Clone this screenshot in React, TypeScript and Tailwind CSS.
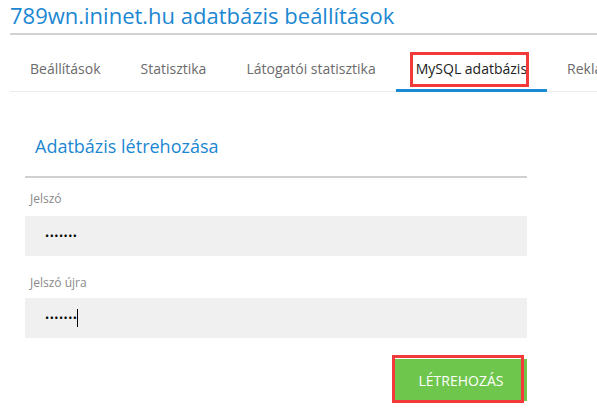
import React from "react";

export default function App() {
  const tabs = ["Beállítások", "Statisztika", "Látogatói statisztika", "MySQL adatbázis", "Reklámok"];
  return (
    <div className="w-[597px] h-[418px] overflow-hidden bg-white" style={{ fontFamily: '"Open Sans", sans-serif' }}>
      <div className="pl-[10px]">
        <h1 className="text-[22px] leading-[22px] pt-[4px] text-[#1b87d2] whitespace-nowrap">789wn.ininet.hu adatbázis beállítások</h1>
        <div className="mt-[7px] h-[2px] bg-[#d2d2d2]" />
        <div className="mt-[20px] flex whitespace-nowrap border-b border-[#ececec]">
          {tabs.map((t, i) => (
            <div
              key={t}
              className={
                i === 3
                  ? "relative px-[20px] h-[37px] text-[14px] leading-[20px] pt-[4px] text-[#222] border-b-[3px] border-[#1a8ad4] -mb-[1px]"
                  : "px-[20px] h-[36px] text-[14px] leading-[20px] pt-[4px] text-[#6b6b6b]"
              }
            >
              {t}
              {i === 3 && (
                <div className="absolute left-[14px] right-[18px] top-[-3px] h-[35px] border-[3px] border-[#f23a3a]" />
              )}
            </div>
          ))}
        </div>
      </div>
      <div className="ml-[25px] w-[502px] mt-[42px]">
        <h2 className="pl-[10px] text-[18px] leading-[24px] text-[#1b87d2]">Adatbázis létrehozása</h2>
        <div className="mt-[18px] h-[2px] bg-[#d0d0d0]" />
        <div className="pl-[5px] mt-[14px] text-[12px] leading-[14px] text-[#8a8a8a]">Jelszó</div>
        <div className="mt-[10px] h-[40px] bg-[#f0f0f0] flex items-center pl-[20px]">
          <span className="text-[11px] tracking-[0.5px] text-black">•••••••</span>
        </div>
        <div className="pl-[5px] mt-[20px] text-[12px] leading-[14px] text-[#8a8a8a]">Jelszó újra</div>
        <div className="mt-[8px] h-[40px] bg-[#f0f0f0] flex items-center pl-[20px]">
          <span className="text-[11px] tracking-[0.5px] text-black">•••••••</span>
          <span className="w-[1px] h-[18px] bg-black" />
        </div>
        <div className="flex justify-end mt-[21px]">
          <div className="relative w-[132px] h-[42px] bg-[#6fc64c] text-white text-[14px] flex items-center justify-center">
            LÉTREHOZÁS
            <div className="absolute left-[-3px] top-[-4px] w-[132px] h-[48px] border-[3px] border-[#f23a3a]" />
          </div>
        </div>
      </div>
    </div>
  );
}
